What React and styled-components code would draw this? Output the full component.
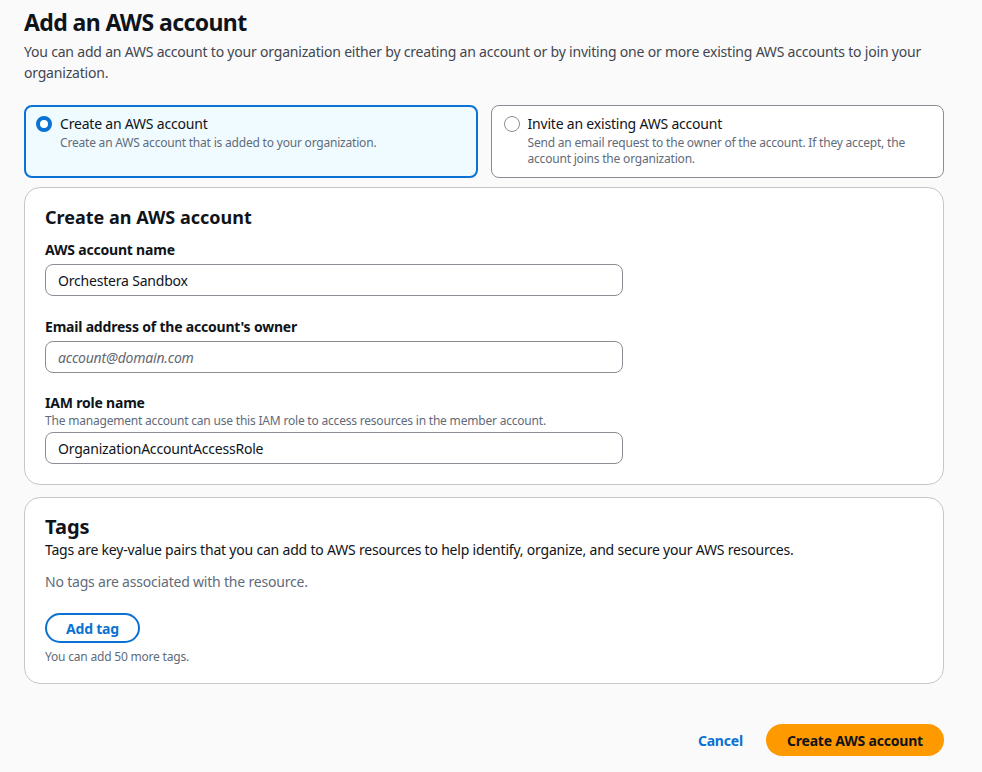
import React, { useState } from "react";
import styled, { createGlobalStyle } from "styled-components";

const GlobalStyle = createGlobalStyle`
  body {
    margin: 0;
    background: #fafafa;
    font-family: "Noto Sans", "Open Sans", sans-serif;
    color: #0f141a;
    letter-spacing: -0.2px;
  }
`;

const Page = styled.div`
  padding: 6px 38px 16px 24px;
  display: flex;
  flex-direction: column;
`;
const Title = styled.h1`
  margin: 0;
  font-size: 23px;
  line-height: 32px;
  font-weight: 700;
  letter-spacing: -0.6px;
`;
const Intro = styled.p`
  margin: 3px 0 0;
  font-size: 14px;
  line-height: 21px;
  color: #424650;
`;
const Tiles = styled.div`
  display: grid;
  grid-template-columns: 1fr 1fr;
  gap: 13px;
  margin-top: 22px;
`;
const Tile = styled.label`
  display: flex;
  gap: 8px;
  align-items: flex-start;
  height: 73px;
  box-sizing: border-box;
  padding: ${(p) => (p.$active ? "7px 10px" : "8px 12px")};
  border-radius: 8px;
  border: ${(p) => (p.$active ? "2px solid #0972d3" : "1px solid #8c8c94")};
  background: ${(p) => (p.$active ? "#f0fbff" : "#fff")};
  cursor: pointer;
`;
const Radio = styled.span`
  flex: none;
  width: 16px;
  height: 16px;
  margin-top: 2px;
  box-sizing: border-box;
  border-radius: 50%;
  border: ${(p) => (p.$checked ? "4px solid #0972d3" : "1px solid #8c8c94")};
  background: #fff;
`;
const TileText = styled.div`
  display: flex;
  flex-direction: column;
`;
const TileTitle = styled.span`
  font-size: 14px;
  line-height: 20px;
`;
const TileDesc = styled.span`
  font-size: 12px;
  line-height: 16px;
  color: #5f6b7a;
  margin-top: 1px;
`;
const Card = styled.section`
  margin-top: ${(p) => p.$top || "9px"};
  background: #fff;
  border: 1px solid #c6c6cd;
  border-radius: 16px;
  padding: ${(p) => p.$pad || "15px 20px 20px"};
  display: flex;
  flex-direction: column;
`;
const CardHeading = styled.h2`
  margin: 0;
  font-size: ${(p) => p.$size || "18px"};
  line-height: ${(p) => p.$lh || "28px"};
  font-weight: 700;
  letter-spacing: 0;
`;
const Field = styled.div`
  display: flex;
  flex-direction: column;
  margin-top: ${(p) => p.$top || "21px"};
`;
const Label = styled.span`
  font-size: 14px;
  line-height: 20px;
  font-weight: 700;
`;
const Hint = styled.span`
  font-size: 12px;
  line-height: 16px;
  color: #5f6b7a;
`;
const Input = styled.input`
  margin-top: ${(p) => p.$top || "4px"};
  width: 578px;
  height: 32px;
  box-sizing: border-box;
  border: 1px solid #8c8c94;
  border-radius: 8px;
  padding: 0 12px;
  font-family: inherit;
  font-size: 14px;
  letter-spacing: -0.2px;
  color: #0f141a;
  background: #fff;
  outline: none;
  &::placeholder {
    color: #656871;
    font-style: italic;
  }
`;
const Body = styled.p`
  margin: ${(p) => p.$top || "0"} 0 0;
  font-size: 14px;
  line-height: 20px;
  color: ${(p) => (p.$muted ? "#5f6b7a" : "#0f141a")};
`;
const Small = styled.p`
  margin: 6px 0 0;
  font-size: 12px;
  line-height: 16px;
  color: #5f6b7a;
`;
const OutlineButton = styled.button`
  align-self: flex-start;
  margin-top: 21px;
  height: 30px;
  padding: 0 19px;
  border: 2px solid #0972d3;
  border-radius: 20px;
  background: #fff;
  color: #0972d3;
  font-family: inherit;
  font-size: 14px;
  font-weight: 700;
  letter-spacing: -0.2px;
  cursor: pointer;
`;
const Footer = styled.div`
  display: flex;
  justify-content: flex-end;
  align-items: center;
  gap: 23px;
  margin-top: 40px;
`;
const LinkButton = styled.button`
  border: none;
  background: none;
  padding: 0;
  color: #0972d3;
  font-family: inherit;
  font-size: 14px;
  font-weight: 700;
  letter-spacing: -0.2px;
  cursor: pointer;
`;
const PrimaryButton = styled.button`
  height: 32px;
  padding: 0 21px;
  border: none;
  border-radius: 20px;
  background: #ff9900;
  color: #0f141a;
  font-family: inherit;
  font-size: 14px;
  font-weight: 700;
  letter-spacing: -0.2px;
  cursor: pointer;
`;

const App = () => {
  const [mode, setMode] = useState("create");
  const tiles = [
    {
      id: "create",
      title: "Create an AWS account",
      desc: "Create an AWS account that is added to your organization.",
    },
    {
      id: "invite",
      title: "Invite an existing AWS account",
      desc: "Send an email request to the owner of the account. If they accept, the account joins the organization.",
    },
  ];
  return (
    <>
      <GlobalStyle />
      <Page>
        <Title>Add an AWS account</Title>
        <Intro>
          You can add an AWS account to your organization either by creating an
          account or by inviting one or more existing AWS accounts to join your
          organization.
        </Intro>
        <Tiles>
          {tiles.map((t) => (
            <Tile key={t.id} $active={mode === t.id} onClick={() => setMode(t.id)}>
              <Radio $checked={mode === t.id} />
              <TileText>
                <TileTitle>{t.title}</TileTitle>
                <TileDesc>{t.desc}</TileDesc>
              </TileText>
            </Tile>
          ))}
        </Tiles>

        <Card $pad="15px 20px 20px">
          <CardHeading>Create an AWS account</CardHeading>
          <Field $top="9px">
            <Label>AWS account name</Label>
            <Input defaultValue="Orchestera Sandbox" />
          </Field>
          <Field>
            <Label>Email address of the account's owner</Label>
            <Input placeholder="account@domain.com" />
          </Field>
          <Field $top="20px">
            <Label>IAM role name</Label>
            <Hint>
              The management account can use this IAM role to access resources in
              the member account.
            </Hint>
            <Input $top="3px" defaultValue="OrganizationAccountAccessRole" />
          </Field>
        </Card>

        <Card $top="12px" $pad="16px 20px 18px">
          <CardHeading $size="20px" $lh="26px">Tags</CardHeading>
          <Body>
            Tags are key-value pairs that you can add to AWS resources to help
            identify, organize, and secure your AWS resources.
          </Body>
          <Body $muted $top="12px">No tags are associated with the resource.</Body>
          <OutlineButton>Add tag</OutlineButton>
          <Small>You can add 50 more tags.</Small>
        </Card>

        <Footer>
          <LinkButton>Cancel</LinkButton>
          <PrimaryButton>Create AWS account</PrimaryButton>
        </Footer>
      </Page>
    </>
  );
};

export default App;
